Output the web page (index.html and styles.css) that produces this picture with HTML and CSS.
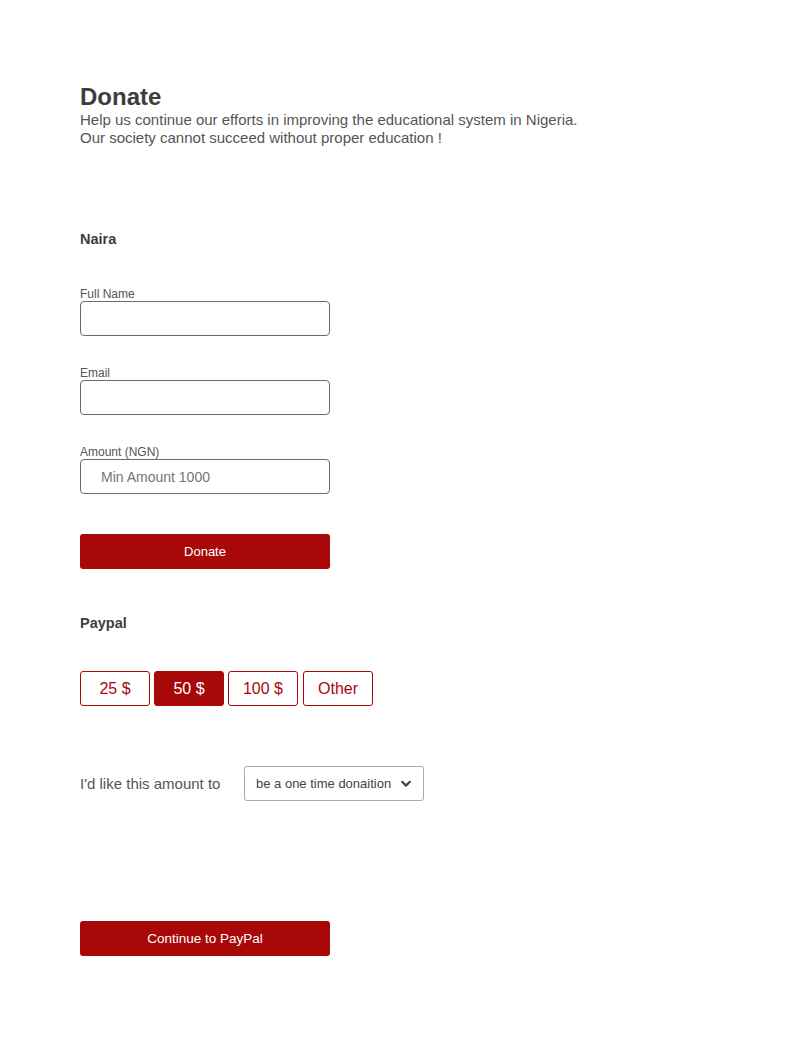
FILE: index.html
```html
<!DOCTYPE html>
<html>
<head>
<meta charset="utf-8">
<link rel="stylesheet" href="styles.css">
</head>
<body>
<main class="page">
  <header class="intro">
    <h1 class="title">Donate</h1>
    <p class="lead">Help us continue our efforts in improving the educational system in Nigeria.<br>Our society cannot succeed without proper education !</p>
  </header>

  <section class="naira">
    <h2 class="section-title">Naira</h2>
    <form class="form">
      <div class="field">
        <label class="label">Full Name</label>
        <input class="input" type="text">
      </div>
      <div class="field">
        <label class="label">Email</label>
        <input class="input" type="email">
      </div>
      <div class="field">
        <label class="label">Amount (NGN)</label>
        <input class="input input-amount" type="text" placeholder="Min Amount 1000">
      </div>
      <button type="button" class="btn-primary btn-donate">Donate</button>
    </form>
  </section>

  <section class="paypal">
    <h2 class="section-title">Paypal</h2>
    <div class="amounts">
      <button type="button" class="amount">25 $</button>
      <button type="button" class="amount active">50 $</button>
      <button type="button" class="amount">100 $</button>
      <button type="button" class="amount amount-other">Other</button>
    </div>
    <div class="recurring">
      <span class="recurring-label">I'd like this amount to</span>
      <div class="select">
        <span>be a one time donaition</span>
        <svg class="chev" width="10" height="8" viewBox="0 0 10 8"><path d="M1.2 1.8 L5 5.6 L8.8 1.8" fill="none" stroke="#444" stroke-width="2.2" stroke-linecap="round" stroke-linejoin="round"/></svg>
      </div>
    </div>
    <button type="button" class="btn-primary btn-paypal">Continue to PayPal</button>
  </section>
</main>
</body>
</html>
```

FILE: styles.css
```css
* { box-sizing: border-box; }
html, body { margin: 0; padding: 0; background: #fff; }
body {
  font-family: "Liberation Sans", Arial, sans-serif;
  color: #444;
}
.page {
  padding: 83px 80px 0 80px;
}
.title {
  margin: 0;
  font-size: 24px;
  line-height: 28px;
  font-weight: bold;
  color: #3d3d3d;
}
.lead {
  margin: 0;
  font-size: 15px;
  line-height: 18px;
  color: #555;
}
.naira { margin-top: 84px; }
.section-title {
  margin: 0;
  font-size: 14.5px;
  line-height: 17px;
  font-weight: bold;
  color: #3d3d3d;
}
.form {
  display: flex;
  flex-direction: column;
  width: 250px;
  margin-top: 39px;
}
.field {
  display: flex;
  flex-direction: column;
  margin-bottom: 30px;
}
.field:nth-child(3) { margin-bottom: 40px; }
.label {
  font-size: 12px;
  line-height: 14px;
  color: #555;
}
.input {
  width: 250px;
  height: 35px;
  border: 1px solid #6b6b6b;
  border-radius: 4px;
  font-family: inherit;
  font-size: 14px;
  padding: 0 20px;
  outline: none;
}
.input::placeholder { color: #757575; }
.btn-primary {
  display: block;
  width: 250px;
  height: 35px;
  background: #a80808;
  color: #fff;
  border: none;
  border-radius: 3px;
  font-family: inherit;
  font-size: 13px;
  padding: 0;
}
.btn-paypal { font-size: 13.5px; }
.paypal { margin-top: 46px; }
.amounts {
  display: flex;
  gap: 4px;
  margin-top: 39px;
}
.amount {
  width: 70px;
  height: 35px;
  background: #fff;
  border: 1px solid #a80808;
  border-radius: 3px;
  color: #a80808;
  font-family: inherit;
  font-size: 16px;
  padding: 0;
}
.amount-other { margin-left: 1px; }
.amount.active {
  background: #a80808;
  color: #fff;
}
.recurring {
  display: flex;
  align-items: center;
  margin-top: 60px;
}
.recurring-label {
  font-size: 15px;
  color: #555;
  width: 164px;
}
.select {
  width: 180px;
  height: 35px;
  border: 1px solid #aaa;
  border-radius: 3px;
  display: flex;
  align-items: center;
  justify-content: space-between;
  padding: 0 12px 0 11px;
  font-size: 13px;
  color: #444;
}
.chev { display: block; }
.btn-paypal { margin-top: 120px; }
```
